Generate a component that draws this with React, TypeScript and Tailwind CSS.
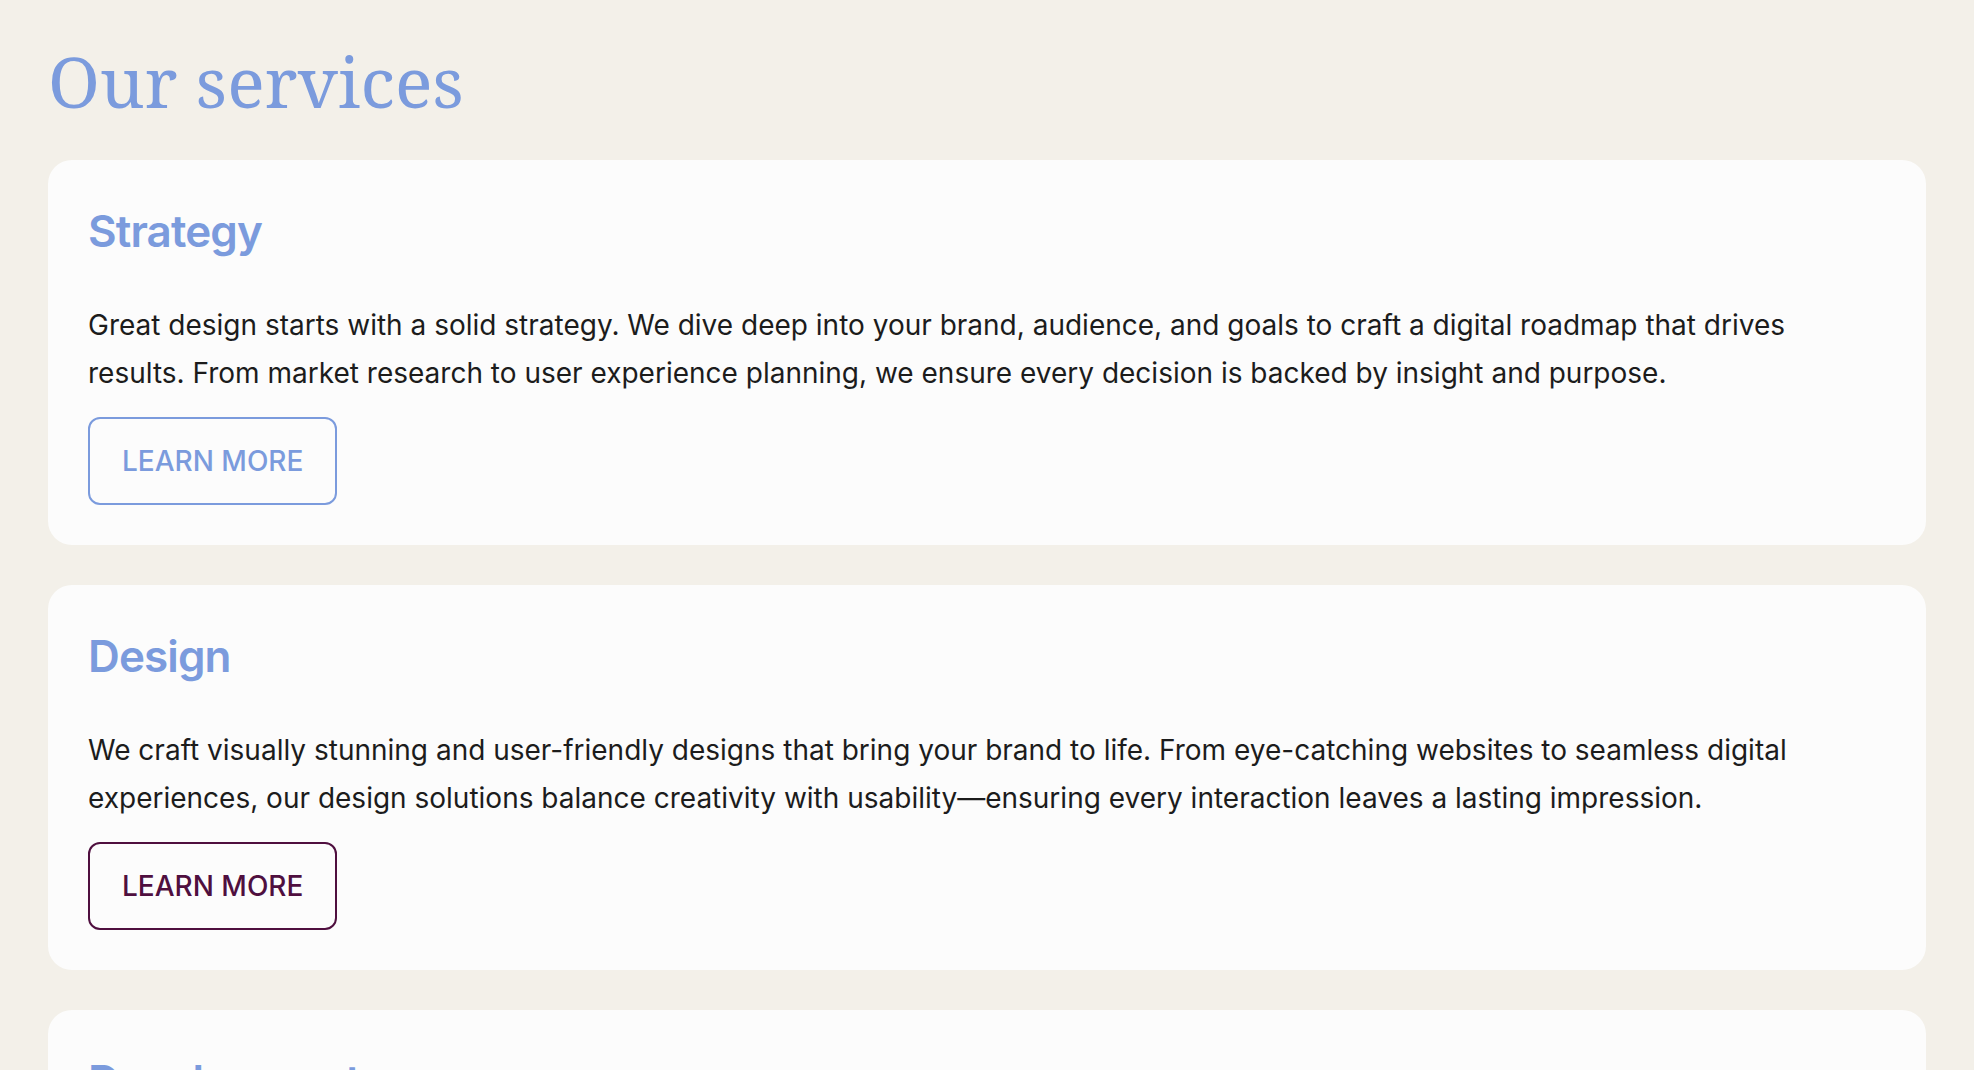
import React from 'react';

const services = [
  {
    title: 'Strategy',
    text: 'Great design starts with a solid strategy. We dive deep into your brand, audience, and goals to craft a digital roadmap that drives results. From market research to user experience planning, we ensure every decision is backed by insight and purpose.',
    variant: 'blue',
  },
  {
    title: 'Design',
    text: 'We craft visually stunning and user-friendly designs that bring your brand to life. From eye-catching websites to seamless digital experiences, our design solutions balance creativity with usability—ensuring every interaction leaves a lasting impression.',
    variant: 'plum',
  },
  {
    title: 'Development',
    text: 'Our developers turn ideas into fast, secure and scalable products. From custom websites to complex web applications, we build with modern technologies so your digital presence performs flawlessly on every device.',
    variant: 'blue',
  },
];

export default function App() {
  return (
    <div className="min-h-screen bg-[#f3f0e9] px-12 pt-[39px] pb-12 font-['Inter',sans-serif]">
      <h1 className="font-['Noto_Serif','DejaVu_Serif',serif] text-[70px] leading-[84px] text-[#7b9bdd] mb-[37px]">
        Our services
      </h1>

      <div className="flex flex-col gap-10">
        {services.map(s => (
          <div key={s.title} className="bg-[#fcfcfc] rounded-3xl px-10 pt-[44px] pb-10">
            <h2 className="text-[44px] leading-[54px] font-semibold text-[#7b9bdd] tracking-[-0.02em]">{s.title}</h2>
            <p className="mt-[43px] text-[28px] leading-[48px] text-[#1c1c1c]">{s.text}</p>
            <button
              className={
                s.variant === 'plum'
                  ? 'mt-5 border-2 border-[#4f0f3f] text-[#4f0f3f] rounded-xl px-8 py-[21px] text-[28px] leading-[42px] font-medium'
                  : 'mt-5 border-2 border-[#7b9bdd] text-[#7b9bdd] rounded-xl px-8 py-[21px] text-[28px] leading-[42px] font-medium'
              }
            >
              LEARN MORE
            </button>
          </div>
        ))}
      </div>
    </div>
  );
}
